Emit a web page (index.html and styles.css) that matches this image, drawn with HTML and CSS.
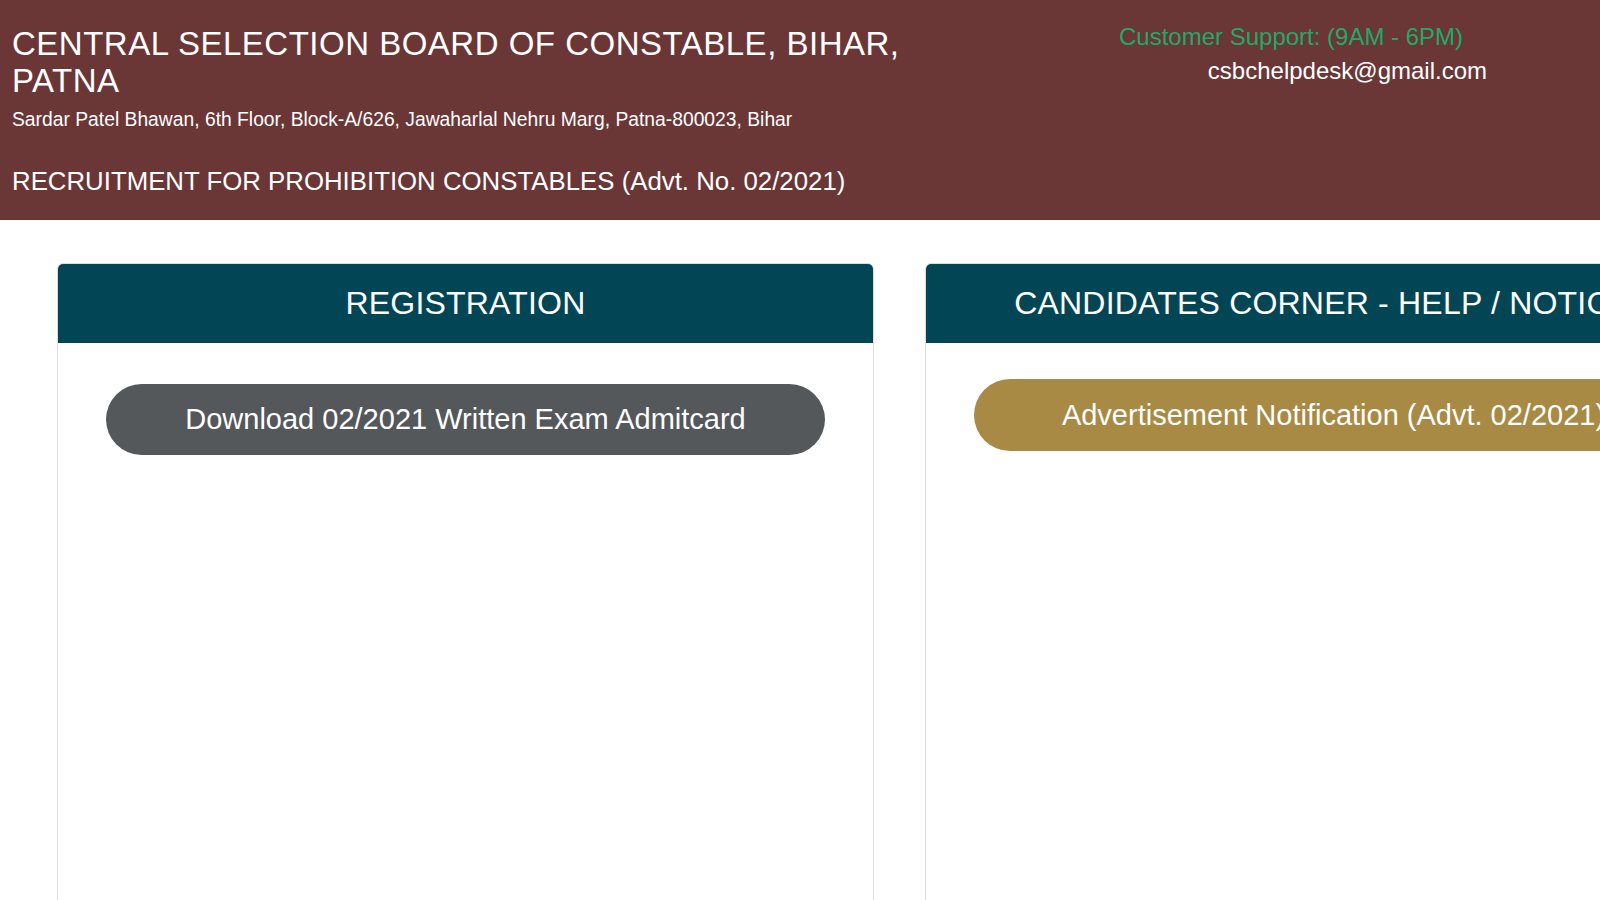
FILE: index.html
```html
<!DOCTYPE html>
<html lang="en">
<head>
<meta charset="utf-8">
<title>CSBC Bihar - Prohibition Constables Recruitment</title>
<link rel="stylesheet" href="styles.css">
</head>
<body>
<div class="page">
  <header class="topbar">
    <div class="org">
      <h1 class="org-name">CENTRAL SELECTION BOARD OF CONSTABLE, BIHAR,<br>PATNA</h1>
      <p class="org-address">Sardar Patel Bhawan, 6th Floor, Block-A/626, Jawaharlal Nehru Marg, Patna-800023, Bihar</p>
      <p class="org-advt">RECRUITMENT FOR PROHIBITION CONSTABLES (Advt. No. 02/2021)</p>
    </div>
    <div class="support">
      <div class="support-label">Customer Support: (9AM - 6PM)</div>
      <div class="support-mail">csbchelpdesk@gmail.com</div>
    </div>
  </header>

  <main class="panels">
    <section class="panel">
      <div class="panel-head">REGISTRATION</div>
      <div class="panel-body">
        <a class="pill pill-dark" href="#">Download 02/2021 Written Exam Admitcard</a>
      </div>
    </section>
    <section class="panel">
      <div class="panel-head">CANDIDATES CORNER - HELP / NOTICES</div>
      <div class="panel-body panel-body-tight">
        <a class="pill pill-gold" href="#">Advertisement Notification (Advt. 02/2021)</a>
      </div>
    </section>
  </main>
</div>
</body>
</html>
```

FILE: styles.css
```css
html, body {
  margin: 0;
  padding: 0;
  background: #ffffff;
}

body {
  font-family: "Liberation Sans", Arial, sans-serif;
  color: #ffffff;
}

.page {
  width: 1600px;
  height: 900px;
  overflow: hidden;
}

.topbar {
  height: 220px;
  background: #6b3636;
  display: flex;
  justify-content: space-between;
  box-sizing: border-box;
  padding: 25px 113px 0 12px;
}

.org-name {
  margin: 0;
  font-size: 33px;
  line-height: 37px;
  font-weight: normal;
  letter-spacing: 0.5px;
}

.org-address {
  margin: 10px 0 0;
  font-size: 19.3px;
  line-height: 22px;
}

.org-advt {
  margin: 35px 0 0;
  font-size: 25.8px;
  line-height: 30px;
}

.support {
  width: 368px;
  display: flex;
  flex-direction: column;
  margin-top: -5px;
  font-size: 24px;
  line-height: 34px;
}

.support-label {
  color: #1faa68;
}

.support-mail {
  align-self: flex-end;
}

.panels {
  display: flex;
  gap: 51px;
  padding: 43px 0 0 57px;
}

.panel {
  flex: 0 0 815px;
  height: 700px;
  border: 1px solid #dcdcdc;
  border-radius: 6px 6px 0 0;
  overflow: hidden;
}

.panel-head {
  height: 79px;
  background: #024656;
  display: flex;
  align-items: center;
  justify-content: center;
  font-size: 32px;
  letter-spacing: 0.2px;
  white-space: nowrap;
}

.panel-body {
  padding: 41px 48px 0;
}

.panel-body-tight {
  padding-top: 36px;
}

.pill {
  display: flex;
  align-items: center;
  justify-content: center;
  height: 71px;
  border-radius: 36px;
  color: #ffffff;
  text-decoration: none;
  font-size: 29px;
  white-space: nowrap;
}

.pill-dark {
  background: #55585b;
}

.pill-gold {
  background: #a88a45;
  height: 72px;
}
```
